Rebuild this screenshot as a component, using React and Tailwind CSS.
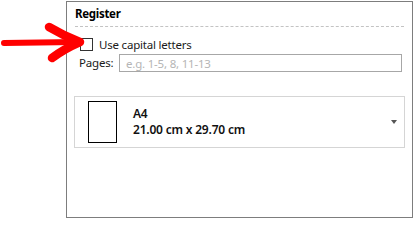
import { useState } from 'react';

const font = { fontFamily: '"Noto Sans", "Open Sans", Arial, sans-serif' };

function RedArrow() {
  return (
    <svg className="absolute left-0 top-[20px]" width="90" height="45" viewBox="0 20 90 45">
      <path d="M4 42 L76 41" stroke="#ff0000" strokeWidth="6" strokeLinecap="round" fill="none" />
      <path d="M49 26 Q64 35 80 41 Q64 48 52 57" stroke="#ff0000" strokeWidth="8.5" strokeLinecap="round" strokeLinejoin="round" fill="none" />
    </svg>
  );
}

function PaperCard() {
  return (
    <div className="mt-[24px] flex h-[52px] w-[331px] items-center border border-[#d5d5d5] pl-[13px] pr-[6px]">
      <div className="h-[42px] w-[29px] border border-black bg-white" />
      <div className="ml-[16px] flex flex-col text-[12px] font-semibold leading-[16px] tracking-[-0.2px] text-[#111]">
        <span>A4</span>
        <span>21.00 cm x 29.70 cm</span>
      </div>
      <div className="ml-auto mr-[1px] h-0 w-0 border-x-[3.5px] border-t-[4px] border-x-transparent border-t-[#555]" />
    </div>
  );
}

export default function App() {
  const [caps, setCaps] = useState(false);

  return (
    <div className="relative h-[219px] w-[414px] bg-white text-[11.5px] tracking-[-0.2px] text-[#1a1a1a]" style={font}>
      <RedArrow />
      <div className="ml-[66px] mt-[1px] flex h-[217px] w-[347px] flex-col border border-[#7d7d7d] pl-[7px] pr-[7px] pt-[3px]">
        <div className="ml-[1px] text-[11.5px] font-bold leading-[18px] tracking-[-0.3px] text-black">Register</div>
        <div className="ml-[1px] mt-[3px] w-[329px] border-t border-dashed border-[#c3c3c3]" />

        <label className="ml-[6px] mt-[11px] flex h-[13px] items-center">
          <input
            type="checkbox"
            checked={caps}
            onChange={(e) => setCaps(e.target.checked)}
            className="sr-only"
          />
          <span className="h-[13px] w-[13px] border border-[#333] bg-white" />
          <span className="ml-[6px] leading-[13px] text-[#1a1a1a]">Use capital letters</span>
        </label>

        <div className="ml-[5px] mt-[3px] flex h-[18px] items-center">
          <span className="w-[40px] text-[#1a1a1a]">Pages:</span>
          <input
            placeholder="e.g. 1-5, 8, 11-13"
            className="h-[18px] w-[283px] border border-[#a7a7a7] px-[6px] text-[11.5px] tracking-[-0.2px] text-[#1a1a1a] outline-none placeholder:text-[#b5b5b5]"
          />
        </div>

        <PaperCard />
      </div>
    </div>
  );
}
